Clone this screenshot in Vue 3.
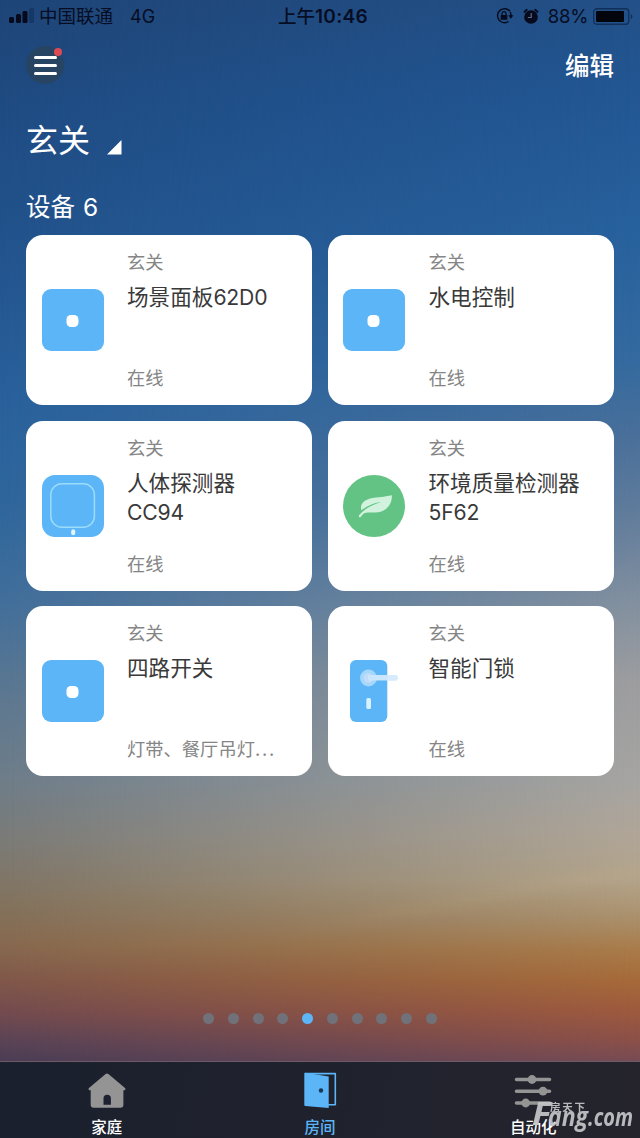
<script setup>
const devices = [
  { name: '场景面板', code: '62D0', icon: 'switch', status: '在线' },
  { name: '水电控制', code: '', icon: 'switch', status: '在线' },
  { name: '人体探测器', code: 'CC94', icon: 'sensor', status: '在线' },
  { name: '环境质量检测器', code: '5F62', icon: 'leaf', status: '在线' },
  { name: '四路开关', code: '', icon: 'switch', status: '灯带、餐厅吊灯', more: true },
  { name: '智能门锁', code: '', icon: 'lock', status: '在线' },
]
const pages = 10
const activePage = 5
</script>

<template>
  <div class="screen">
    <header class="status">
      <div class="status-left">
        <svg class="signal" width="25" height="16" viewBox="0 0 25 16">
          <rect x="0" y="9" width="5" height="6" rx="1.5" fill="#060a1c" />
          <rect x="7" y="6" width="5" height="9" rx="1.5" fill="#060a1c" />
          <rect x="13.500" y="3" width="5" height="12" rx="1.500" fill="#060a1c" />
          <rect x="20" y="0" width="5" height="15" rx="1.500" fill="#153866" />
        </svg>
        <span class="carrier">中国联通</span>
        <span class="net">4G</span>
      </div>
      <div class="time">上午<span class="clock">10:46</span></div>
      <div class="status-right">
        <svg class="rot" width="18" height="16" viewBox="0 0 18 16">
          <path d="M14 3.300A7 7 0 1 0 12.500 13.500M14.200 4A7 7 0 0 1 15 8" fill="none" stroke="#060a1c" stroke-width="1.400" />
          <path d="M12.300 7.300h5.200L14.900 10.800z" fill="#060a1c" />
          <rect x="4.700" y="7" width="6.600" height="4.800" rx=".6" fill="#060a1c" />
          <path d="M6 7V5.700a2 2 0 0 1 4 0V7" fill="none" stroke="#060a1c" stroke-width="1.200" />
        </svg>
        <svg class="alarm" width="16" height="17" viewBox="0 0 16 17">
          <circle cx="8" cy="9" r="6.800" fill="#060a1c" />
          <path d="M1.500 3.800L3.800 1.800M14.500 3.800L12.200 1.800" stroke="#060a1c" stroke-width="1.800" stroke-linecap="round" />
          <path d="M8.200 5v4.500H4.800" fill="none" stroke="#5d6f86" stroke-width="1.200" />
        </svg>
        <span class="percent">88%</span>
        <svg width="40" height="17" viewBox="0 0 40 17">
          <rect x=".75" y=".75" width="35" height="15.500" rx="3" fill="none" stroke="#10305a" stroke-width="1.300" />
          <rect x="3" y="3" width="28" height="11" rx="1" fill="#03050d" />
          <path d="M37.700 5.700q3.400 2.800 0 5.600z" fill="#12315c" />
        </svg>
      </div>
    </header>

    <nav class="top">
      <div class="menu">
        <i></i><i></i><i></i>
        <b class="badge"></b>
      </div>
      <span class="edit">编辑</span>
    </nav>

    <div class="room-title">
      <h1>玄关</h1>
      <svg width="15" height="15" viewBox="0 0 15 15"><path d="M14.500 0v14.500H0z" fill="#fff" /></svg>
    </div>
    <h2>设备 <span class="count">6</span></h2>

    <main class="grid">
      <article v-for="d in devices" :key="d.name" class="card">
        <div class="pic">
          <svg v-if="d.icon === 'switch'" width="62" height="62" viewBox="0 0 62 62">
            <rect width="62" height="62" rx="9" fill="#5bb5f6" />
            <rect x="24.500" y="26" width="12" height="12" rx="4.500" fill="#fff" />
          </svg>
          <svg v-else-if="d.icon === 'sensor'" width="62" height="62" viewBox="0 0 62 62">
            <rect width="62" height="62" rx="13" fill="#5bb5f6" />
            <rect x="8.800" y="8.800" width="43.600" height="43.400" rx="11" fill="none" stroke="#9bdcfb" stroke-width="1.500" />
            <rect x="29.200" y="54.300" width="4" height="6" rx="2" fill="#e0f6ff" />
          </svg>
          <svg v-else-if="d.icon === 'leaf'" width="62" height="62" viewBox="0 0 62 62">
            <circle cx="31" cy="31" r="31" fill="#62c384" />
            <path d="M48.800 20.300C49.500 27 45 36 35 37.200C29 38 24 36.500 20.500 38.700L17.200 42.500Q15.300 42.300 16 40.300C19.500 36 24 33 28 31Q33 28.500 38.500 27Q28 28 18.300 35.300C16.500 28.500 22 24 31 22.800Q41 22 48.800 20.300z" fill="#d1f2dd" />
          </svg>
          <svg v-else width="62" height="62" viewBox="0 0 62 62">
            <rect x="7" width="37.300" height="62" rx="6" fill="#5bb5f6" />
            <circle cx="25.500" cy="18" r="8.500" fill="#a5d6fb" />
            <circle cx="25.500" cy="18" r="5" fill="#c0dcfa" />
            <path d="M25 15H52a2.800 2.800 0 0 1 0 5.600H25z" fill="#c9e6fd" />
            <path d="M44.300 15h7.700a2.800 2.800 0 0 1 0 5.600h-7.700z" fill="#d7ebfd" />
            <rect x="23.300" y="38" width="4.700" height="11" rx="1.500" fill="#d8f2ff" />
          </svg>
        </div>
        <div class="info">
          <div class="room">玄关</div>
          <div class="name">{{ d.name }}<span v-if="d.code" class="code">{{ d.code }}</span></div>
          <div class="state">{{ d.status }}<span v-if="d.more" class="more">...</span></div>
        </div>
      </article>
    </main>

    <div class="dots">
      <i v-for="n in pages" :key="n" :class="{ on: n === activePage }"></i>
    </div>

    <footer class="tabs">
      <div class="tab">
        <svg width="38" height="38" viewBox="0 0 38 38">
          <path d="M17.600 3.100q1.400-1.200 2.800 0L37 17q1.200 1.800-.8 2.200H35.400V33.700q0 3-3 3H5.700q-3 0-3-3V19.200H1.800Q-.2 18.800 1 17z" fill="#949494" />
          <path d="M15.500 33.800v-6.300a3.700 3.700 0 0 1 7.400 0v6.300z" fill="#1d2130" />
        </svg>
        <span>家庭</span>
      </div>
      <div class="tab active">
        <svg width="38" height="38" viewBox="0 0 38 38">
          <path d="M4 2.600h30.300v31.200H27" fill="none" stroke="#5bb5f6" stroke-width="1.600" stroke-linejoin="round" />
          <path d="M3.300 2.300q0-.8 1-.6L27.700 5.500V37L4.300 34.900q-1-.1-1-1z" fill="#5bb5f6" />
          <circle cx="20" cy="19.500" r="2.200" fill="#193653" />
        </svg>
        <span>房间</span>
      </div>
      <div class="tab">
        <svg width="38" height="38" viewBox="0 0 38 38">
          <path d="M2.500 8.500h33M2.500 20.200h33M2.500 32h33" stroke="#949494" stroke-width="3.600" stroke-linecap="round" />
          <circle cx="18" cy="8.500" r="4.400" fill="#949494" />
          <circle cx="29" cy="20.200" r="4.400" fill="#949494" />
          <circle cx="11.700" cy="32" r="4.400" fill="#949494" />
        </svg>
        <span>自动化</span>
      </div>
    </footer>

    <svg class="mark" width="121" height="44" viewBox="0 0 121 44">
      <g fill="#c4c6ca" font-family="'Open Sans', 'Noto Sans', sans-serif" font-style="italic" font-weight="700">
        <text x="13" y="28" font-size="32" textLength="19" lengthAdjust="spacingAndGlyphs">F</text>
        <text x="29" y="28.500" font-size="26" textLength="40" lengthAdjust="spacingAndGlyphs">ang</text>
        <text x="69" y="28.500" font-size="25" textLength="45" lengthAdjust="spacingAndGlyphs">.com</text>
      </g>
      <text x="31" y="13.500" font-family="'Noto Sans CJK SC', sans-serif" font-weight="700" font-size="10.500" textLength="35" fill="#c4c6ca">房天下</text>
    </svg>
  </div>
</template>

<style>
body { background: #1c1f2b; }
</style>

<style scoped>
* { box-sizing: border-box; }
.screen {
  position: relative;
  isolation: isolate;
  width: 640px;
  height: 1138px;
  overflow: hidden;
  display: flex;
  flex-direction: column;
  color: #fff;
  font-family: Inter, 'Noto Sans CJK SC', sans-serif;
  background: linear-gradient(180deg, #1f4577 0, #1f4b82 100px, #22528b 230px, #29619c 400px, #2e669c 500px, #416e9b 600px, #5d7890 700px, #6e7d89 780px, #7b7b77 840px, #82735f 900px, #87694f 945px, #80574a 982px, #734b4f 1013px, #594356 1042px, #4a3d55 1062px);
}
.screen::before {
  content: '';
  position: absolute;
  inset: 0;
  z-index: -1;
  background: linear-gradient(180deg, #235087 0, #225794 100px, #27619d 230px, #346a9f 360px, #486f9a 430px, #607b9b 510px, #82909f 600px, #9d9d9f 680px, #a6a5a2 780px, #b0a699 830px, #b3a48a 880px, #aa8f6a 920px, #a97b49 950px, #a66a39 980px, #9e5a3d 1010px, #8c5048 1040px, #764b54 1062px);
  -webkit-mask-image: linear-gradient(90deg, transparent, #000);
  mask-image: linear-gradient(90deg, transparent, #000);
}
.screen::after {
  content: '';
  position: absolute;
  z-index: -1;
  left: 270px;
  top: 890px;
  width: 420px;
  height: 16px;
  background: linear-gradient(90deg, transparent, rgba(196, 172, 138, .22));
  border-radius: 50%;
  filter: blur(5px);
  transform: rotate(-10deg);
}
.status {
  height: 32px;
  padding: 0 7px 0 9px;
  display: grid;
  grid-template-columns: 1fr auto 1fr;
  align-items: center;
  color: #060d24;
  font-size: 18.5px;
}
.status-left, .status-right { display: flex; align-items: center; }
.status-right { justify-content: flex-end; }
.signal { margin-right: 5px; }
.carrier, .time { margin-top: -2px; }
.net { margin-left: 17px; font-size: 18px; }
.time { padding-left: 4px; font-weight: 500; font-size: 18.500px; }
.clock { font-weight: 600; font-size: 19px; letter-spacing: .3px; }
.rot { margin-right: 9px; }
.alarm { margin-right: 9px; }
.percent { margin-right: 5px; font-size: 18.500px; letter-spacing: -.3px; }
.top {
  height: 66px;
  padding: 0 26px;
  display: flex;
  justify-content: space-between;
  align-items: center;
}
.menu {
  position: relative;
  width: 38px;
  height: 38px;
  border-radius: 50%;
  background: #274462;
  display: flex;
  flex-direction: column;
  align-items: center;
  justify-content: center;
  gap: 5px;
}
.menu i { width: 23px; height: 3px; border-radius: 2px; background: #fff; }
.badge {
  position: absolute;
  top: 2px;
  right: 2px;
  width: 8px;
  height: 8px;
  border-radius: 50%;
  background: #dc4b54;
}
.edit { margin-top: -2px; font-size: 24.500px; font-weight: 500; }
.room-title {
  height: 82px;
  padding-left: 26px;
  display: flex;
  align-items: center;
  gap: 17px;
}
.room-title svg { margin-top: 16px; }
h1 { margin: 3px 0 0; font-size: 32px; line-height: 48px; font-weight: 400; }
h2 { margin: 0; height: 55px; padding: 9px 0 0 26px; font-size: 24.500px; line-height: 36px; font-weight: 400; }
.count { margin-left: 1px; }
.grid {
  padding: 0 26px;
  display: grid;
  grid-template-columns: 286px 286px;
  grid-auto-rows: 170px;
  gap: 15.500px;
}
.card {
  display: grid;
  grid-template-columns: 62px 1fr;
  column-gap: 23.500px;
  padding: 0 26px 0 15.500px;
  border-radius: 17px;
  background: #fff;
  color: #393939;
}
.pic { padding-top: 54px; }
.pic svg, .tab svg { display: block; }
.info { display: flex; flex-direction: column; padding: 14px 0 14px; }
.room, .state { font-size: 18.300px; line-height: 26px; color: #858585; white-space: nowrap; }
.more { letter-spacing: 1.800px; }
.name { margin-top: 8px; font-size: 21.600px; line-height: 29.500px; }
.code { font-size: 21.200px; letter-spacing: -.2px; }
.state { margin-top: auto; }
.dots { margin-top: 237px; display: flex; justify-content: center; gap: 13.700px; }
.dots i { width: 11px; height: 11px; border-radius: 50%; background: #71717a; }
.dots .on { background: #5bb5f6; }
.tabs {
  margin-top: auto;
  height: 77px;
  padding-top: 9px;
  display: grid;
  grid-template-columns: repeat(3, 1fr);
  background: linear-gradient(100deg, #1b202e, #1f222d 50%, #25242d);
  border-top: 1px solid #6d5a66;
}
.tab {
  display: flex;
  flex-direction: column;
  align-items: center;
  font-size: 15.500px;
  line-height: 22px;
  font-weight: 500;
}
.tab span { margin-top: 8px; }
.active { color: #5bb5f6; }
.mark { position: absolute; left: 519px; top: 1097px; opacity: .92; }
</style>
